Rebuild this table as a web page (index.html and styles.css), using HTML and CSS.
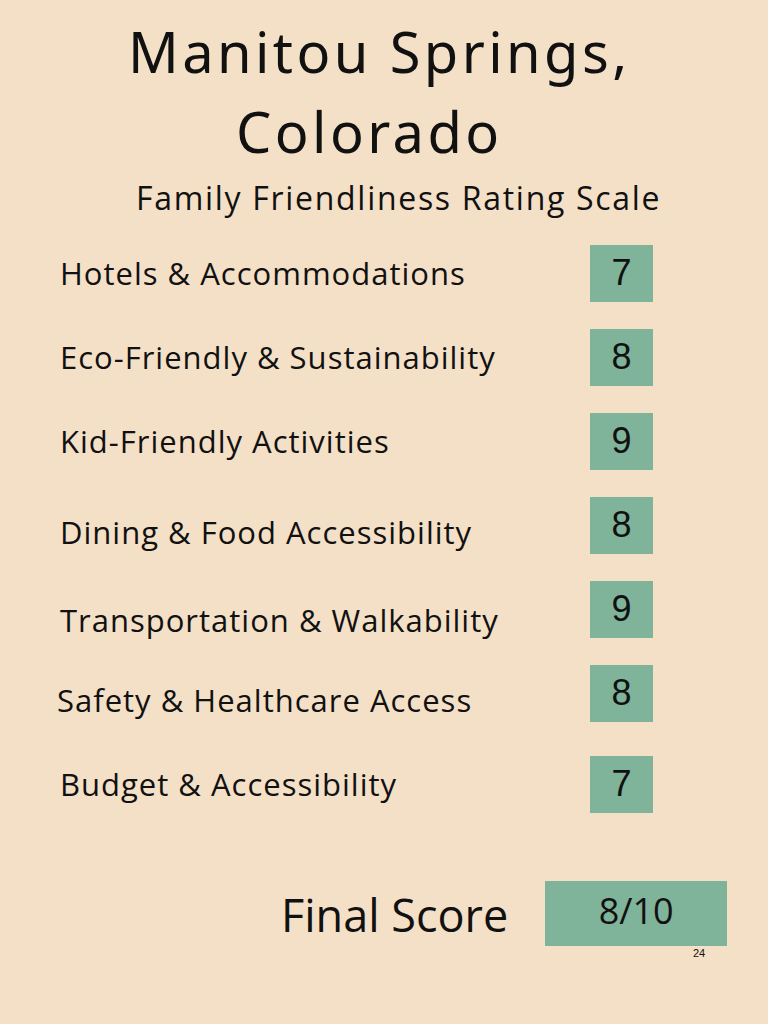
FILE: index.html
```html
<!DOCTYPE html>
<html lang="en">
<head>
<meta charset="utf-8">
<title>Manitou Springs, Colorado</title>
<link rel="stylesheet" href="styles.css">
</head>
<body>
<main class="page">
  <header class="head">
    <h1 class="title"><span class="t1">Manitou Springs,</span><span class="t2">Colorado</span></h1>
    <p class="subtitle">Family Friendliness Rating Scale</p>
  </header>
  <section class="ratings">
    <div class="row"><span class="label">Hotels &amp; Accommodations</span><span class="box">7</span></div>
    <div class="row"><span class="label">Eco-Friendly &amp; Sustainability</span><span class="box">8</span></div>
    <div class="row"><span class="label">Kid-Friendly Activities</span><span class="box">9</span></div>
    <div class="row"><span class="label low1">Dining &amp; Food Accessibility</span><span class="box">8</span></div>
    <div class="row"><span class="label low2">Transportation &amp; Walkability</span><span class="box">9</span></div>
    <div class="row"><span class="label low1 shift">Safety &amp; Healthcare Access</span><span class="box">8</span></div>
    <div class="row last"><span class="label">Budget &amp; Accessibility</span><span class="box">7</span></div>
  </section>
  <section class="final">
    <span class="final-label">Final Score</span>
    <div class="final-col">
      <span class="final-box">8/10</span>
      <span class="page-num">24</span>
    </div>
  </section>
</main>
</body>
</html>
```

FILE: styles.css
```css
html, body {
  margin: 0;
  padding: 0;
}
body {
  background: #f4e0c7;
  color: #111;
  font-family: "Open Sans", "Noto Sans", sans-serif;
}
.page {
  width: 768px;
  height: 1024px;
  box-sizing: border-box;
  padding-top: 11px;
}
.head {
  margin: 0;
}
.title {
  margin: 0;
  font-family: "Noto Sans", "DejaVu Sans", sans-serif;
  font-weight: 400;
  font-size: 56px;
  line-height: 80px;
  letter-spacing: 3.4px;
  display: flex;
  flex-direction: column;
}
.t1 {
  padding-left: 128px;
}
.t2 {
  padding-left: 236px;
}
.subtitle {
  margin: 0;
  padding-left: 136px;
  font-size: 32px;
  line-height: 44px;
  letter-spacing: 1.7px;
  margin-top: 5px;
}
.ratings {
  margin-top: 25px;
  padding-left: 60px;
  display: flex;
  flex-direction: column;
  gap: 27px;
}
.row {
  display: grid;
  grid-template-columns: 530px 63px;
  grid-template-rows: 57px;
}
.row.last {
  margin-top: 7px;
}
.label {
  align-self: start;
  margin-top: 7px;
  font-size: 31px;
  line-height: 42px;
  letter-spacing: 1px;
  white-space: nowrap;
}
.label.low1 {
  margin-top: 14px;
}
.label.low2 {
  margin-top: 18px;
}
.label.shift {
  margin-left: -3px;
}
.box {
  height: 57px;
  background: #7fb39a;
  display: flex;
  align-items: center;
  justify-content: center;
  font-family: "Liberation Sans", "Open Sans", sans-serif;
  font-size: 36px;
  padding-bottom: 2px;
  box-sizing: border-box;
}
.final {
  margin-top: 68px;
  padding-left: 281px;
  display: flex;
  align-items: flex-start;
  gap: 37px;
}
.final-label {
  font-size: 45px;
  line-height: 68px;
}
.final-col {
  display: flex;
  flex-direction: column;
  align-items: flex-end;
}
.final-box {
  width: 182px;
  height: 65px;
  background: #7fb39a;
  display: flex;
  align-items: center;
  justify-content: center;
  font-family: "Open Sans", sans-serif;
  font-size: 36px;
  padding-bottom: 6px;
  box-sizing: border-box;
}
.page-num {
  font-family: "Liberation Sans", sans-serif;
  font-size: 11px;
  margin-top: 1px;
  margin-right: 22px;
}
```
